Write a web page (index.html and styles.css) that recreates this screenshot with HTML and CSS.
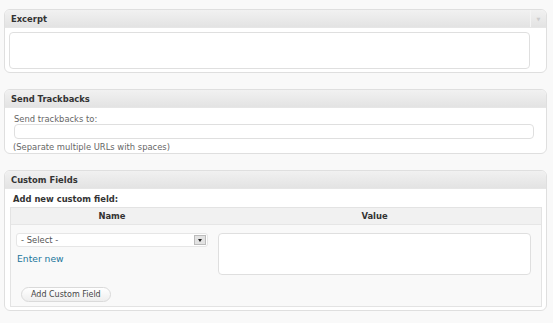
FILE: index.html
```html
<!DOCTYPE html>
<html lang="en">
<head>
  <meta charset="UTF-8">
  <title>Edit Post - Boxes</title>
  <link rel="stylesheet" href="styles.css">
</head>
<body>
  <div class="boxes">
    <!-- Excerpt -->
    <div class="postbox">
      <div class="box-head">
        <h3>Excerpt</h3>
        <span class="toggle">&#9660;</span>
      </div>
      <div class="box-inside excerpt">
        <textarea class="excerpt-text"></textarea>
      </div>
    </div>

    <!-- Trackbacks -->
    <div class="postbox">
      <div class="box-head">
        <h3>Send Trackbacks</h3>
      </div>
      <div class="box-inside trackbacks">
        <label class="tb-label">Send trackbacks to:</label>
        <input type="text" class="tb-input">
        <p class="hint">(Separate multiple URLs with spaces)</p>
      </div>
    </div>

    <!-- Custom Fields -->
    <div class="postbox">
      <div class="box-head">
        <h3>Custom Fields</h3>
      </div>
      <div class="box-inside custom">
        <p class="add-new">Add new custom field:</p>
        <div class="meta-table">
          <div class="meta-head">
            <div class="col-name">Name</div>
            <div class="col-value">Value</div>
          </div>
          <div class="meta-row">
            <div class="col-name">
              <div class="select">
                <span>- Select -</span>
                <span class="select-btn"></span>
              </div>
              <a href="#" class="enter-new">Enter new</a>
            </div>
            <div class="col-value">
              <textarea class="value-text"></textarea>
            </div>
          </div>
          <div class="meta-foot">
            <button class="button">Add Custom Field</button>
          </div>
        </div>
      </div>
    </div>
  </div>
</body>
</html>
```

FILE: styles.css
```css
/* General */
* {
  margin: 0;
  padding: 0;
  box-sizing: border-box;
}

body {
  font-family: 'DejaVu Sans', Verdana, sans-serif;
  font-size: 8.4px;
  color: #666;
  background: #f9f9f9;
}

.boxes {
  display: flex;
  flex-direction: column;
  gap: 16px;
  padding: 9px 6px 0 4px;
}

/* Postbox */
.postbox {
  background: #fff;
  border: 1px solid #dfdfdf;
  border-radius: 6px;
  overflow: hidden;
}

.box-head {
  display: flex;
  align-items: center;
  height: 18px;
  background: linear-gradient(#f1f1f1, #e3e3e3);
  border-bottom: 1px solid #e6e6e6;
}

.box-head h3 {
  flex: 1;
  font-size: 8.4px;
  font-weight: bold;
  color: #333;
  padding-left: 6px;
}

.toggle {
  width: 16px;
  height: 100%;
  border-left: 1px solid #f4f4f4;
  color: #ccc;
  font-size: 5px;
  display: flex;
  align-items: center;
  justify-content: center;
}

textarea, input {
  display: block;
  border: 1px solid #dfdfdf;
  border-radius: 4px;
  background: #fff;
  resize: none;
  outline: none;
}

/* Excerpt */
.excerpt {
  padding: 4px 16px 3px 4px;
}

.excerpt-text {
  width: 100%;
  height: 37px;
}

/* Trackbacks */
.trackbacks {
  padding: 6px 13px 0 8px;
}

.tb-label {
  display: block;
  line-height: 10px;
  padding-left: 1px;
}

.tb-input {
  width: 100%;
  height: 15px;
  margin-left: 1px;
}

.hint {
  line-height: 11px;
  margin-top: 3px;
}

/* Custom fields */
.custom {
  padding: 5px 4px 3px 5px;
}

.add-new {
  font-weight: bold;
  color: #333;
  line-height: 11px;
  padding-left: 3px;
}

.meta-table {
  margin-top: 2px;
  border: 1px solid #e3e3e3;
  background: #f9f9f9;
}

.meta-head {
  display: grid;
  grid-template-columns: 202px 1fr;
  height: 17px;
  align-items: center;
  background: #f1f1f1;
  border-bottom: 1px solid #e6e6e6;
  font-weight: bold;
  color: #333;
  text-align: center;
}

.meta-row {
  display: grid;
  grid-template-columns: 202px 1fr;
  padding-top: 8px;
}

.col-name {
  padding-left: 5px;
  padding-right: 5px;
}

.col-value {
  padding-left: 5px;
  padding-right: 10px;
}

.select {
  display: flex;
  align-items: center;
  justify-content: space-between;
  height: 14px;
  background: #fff;
  border: 1px solid #e6e6e6;
  border-radius: 3px;
  padding: 0 1px 0 4px;
  color: #555;
}

.select-btn {
  width: 12px;
  height: 10px;
  background: #e3e3e3;
  border: 1px solid #bbb;
  position: relative;
}

.select-btn::after {
  content: "";
  position: absolute;
  left: 3px;
  top: 3px;
  border-left: 2.5px solid transparent;
  border-right: 2.5px solid transparent;
  border-top: 3px solid #222;
}

.enter-new {
  display: block;
  margin-top: 6px;
  padding-left: 1px;
  font-size: 9.2px;
  color: #21759b;
  text-decoration: none;
}

.value-text {
  width: 100%;
  height: 42px;
}

.meta-foot {
  padding: 12px 0 4px 10px;
}

.button {
  display: block;
  font-family: inherit;
  font-size: 8px;
  color: #464646;
  background: linear-gradient(#fff, #eee);
  border: 1px solid #dadada;
  border-radius: 10px;
  height: 15px;
  padding: 0 9px;
}
```
